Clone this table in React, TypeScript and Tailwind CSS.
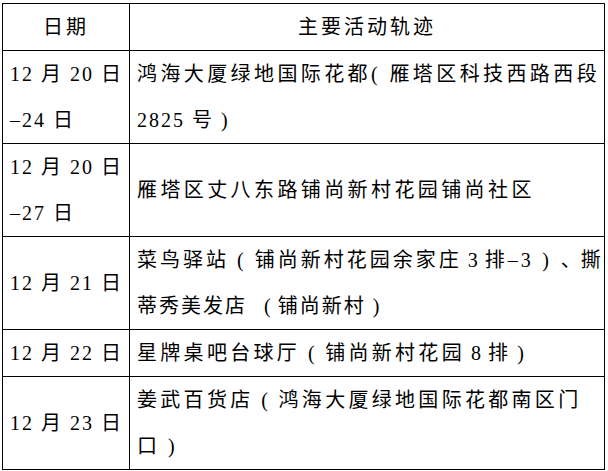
import React from "react";

const S = ({ t, c }: { t: string; c: string }) => <span className={t}>{c}</span>;

const rows: { date: React.ReactNode; text: React.ReactNode }[] = [
  {
    date: (
      <>
        12 月 20 日<br />–24 日
      </>
    ),
    text: (
      <>
        <span className="tracking-[3.4px]">鸿海大厦绿地国际花都( 雁塔区科技西路西段</span>
        <br />
        <span className="tracking-[2px]">2825 号 )</span>
      </>
    ),
  },
  {
    date: (
      <>
        12 月 20 日<br />–27 日
      </>
    ),
    text: <span className="tracking-[3.4px]">雁塔区丈八东路铺尚新村花园铺尚社区</span>,
  },
  {
    date: <>12 月 21 日</>,
    text: (
      <>
        <span className="tracking-[3px]">
          菜鸟驿站
          <S t="tracking-[3px]" c=" ( " />
          铺尚新村花园余家庄
          <S t="tracking-[1px]" c=" 3 " />
          排–3
          <S t="tracking-[3.5px]" c=" ) " />
          <S t="tracking-[0px]" c="、" />撕
        </span>
        <br />
        <span className="tracking-[2px]">
          蒂秀美发店
          <S t="tracking-[12px]" c=" " />
          <S t="tracking-[1px]" c="( " />
          铺尚新村
          <S t="tracking-[2px]" c=" )" />
        </span>
      </>
    ),
  },
  {
    date: <>12 月 22 日</>,
    text: (
      <span className="tracking-[3.3px]">
        星牌桌吧台球厅
        <S t="tracking-[2.8px]" c=" ( " />
        铺尚新村花园
        <S t="tracking-[1px]" c=" 8 " />
        排
        <S t="tracking-[1px]" c=" )" />
      </span>
    ),
  },
  {
    date: <>12 月 23 日</>,
    text: (
      <>
        <span className="tracking-[3.3px]">
          姜武百货店
          <S t="tracking-[2.8px]" c=" ( " />
          鸿海大厦绿地国际花都南区门
        </span>
        <br />
        <span className="tracking-[3.3px]">
          口<S t="tracking-[2.8px]" c=" )" />
        </span>
      </>
    ),
  },
];

export default function App() {
  return (
    <div
      className="w-[608px] h-[471px] bg-white pt-[3px] pl-[2px] text-black"
      style={{ fontFamily: '"Liberation Serif", "Noto Sans CJK SC", serif' }}
    >
      <table className="table-fixed border-collapse w-[603px] text-[20px] leading-[46px]">
        <colgroup>
          <col className="w-[127px]" />
          <col />
        </colgroup>
        <thead>
          <tr>
            <th className="border border-black font-normal text-center p-0 tracking-[3px]">日期</th>
            <th className="border border-black font-normal text-center p-0 tracking-[3px]">主要活动轨迹</th>
          </tr>
        </thead>
        <tbody>
          {rows.map((r, i) => (
            <tr key={i}>
              <td className="border border-black pl-[7px] pr-0 py-0 align-middle whitespace-nowrap tracking-[2px]">
                {r.date}
              </td>
              <td className="border border-black pl-[7px] pr-0 py-0 align-middle whitespace-nowrap">{r.text}</td>
            </tr>
          ))}
        </tbody>
      </table>
    </div>
  );
}
